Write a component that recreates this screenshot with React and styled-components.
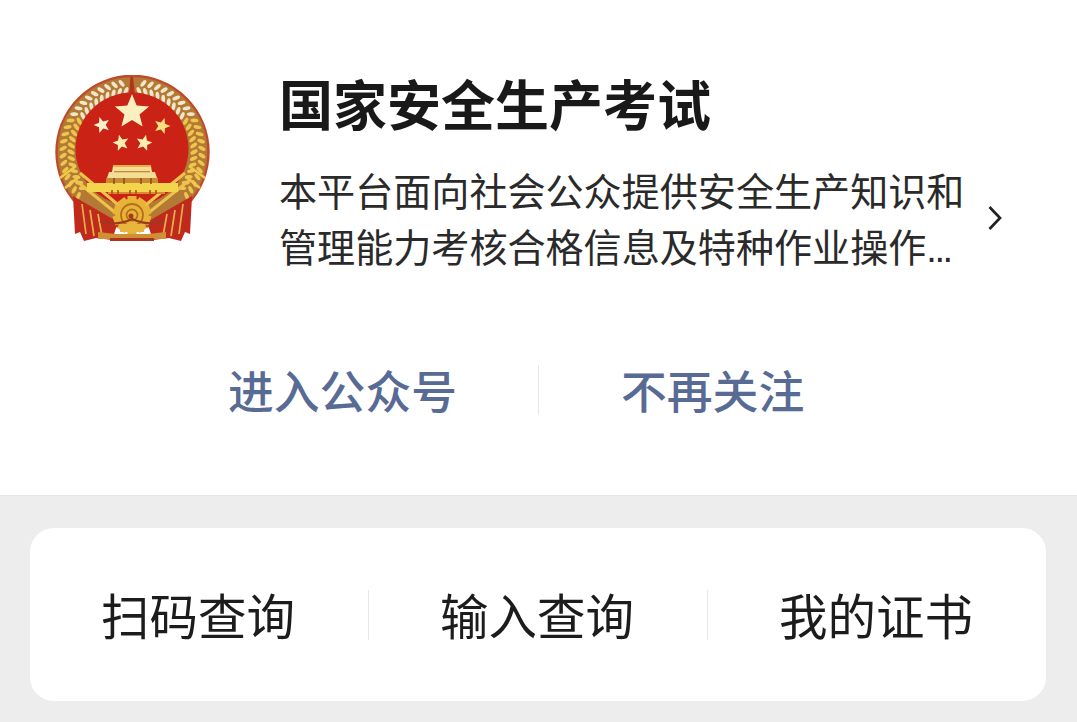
import styled, { createGlobalStyle } from "styled-components";

const GlobalStyle = createGlobalStyle`
  html, body {
    margin: 0;
    padding: 0;
    background: #ededed;
  }
  body {
    font-family: "Liberation Sans", "Noto Sans CJK SC", sans-serif;
    overflow: hidden;
  }
`;

const Page = styled.div`
  width: 1077px;
  height: 722px;
  overflow: hidden;
  background: #ededed;
`;
const Header = styled.header`
  height: 495px;
  background: #fff;
  border-bottom: 1px solid #e5e5e5;
`;
const Profile = styled.div`
  display: flex;
  align-items: flex-start;
  padding: 75px 0 0 54px;
`;
const EmblemSvg = styled.svg`
  flex: none;
  width: 157px;
  height: 168px;
  margin-right: 68px;
`;
const Info = styled.div`
  width: 691px;
  flex: none;
`;
const Title = styled.h1`
  margin: 0;
  font-size: 54px;
  line-height: 64px;
  font-weight: 700;
  color: #191919;
`;
const Desc = styled.p`
  margin: 26px 0 0;
  font-size: 38.1px;
  line-height: 56px;
  font-weight: 400;
  color: #2a2a2a;
  white-space: nowrap;
`;
const Dots = styled.span`
  letter-spacing: -2.5px;
`;
const Chevron = styled.svg`
  flex: none;
  width: 16px;
  height: 26px;
  margin: 130px 0 0 17px;
`;
const Actions = styled.div`
  display: flex;
  align-items: center;
  height: 50px;
  margin-top: 88px;
  padding-left: 228px;
`;
const ActionLink = styled.a`
  font-size: 45.8px;
  line-height: 54px;
  padding-top: 7px;
  font-weight: 500;
  color: #576b95;
`;
const Divider = styled.span`
  flex: none;
  width: 1px;
  height: 50px;
  background: #e8e8e8;
  margin: ${(p) => p.$margin || 0};
`;
const Card = styled.nav`
  display: flex;
  align-items: center;
  height: 173px;
  margin: 32px 31px 0 30px;
  background: #fff;
  border-radius: 24px;
`;
const MenuItem = styled.a`
  flex: 1;
  text-align: center;
  font-size: 48.5px;
  line-height: 56px;
  padding: 7px 2px 0 0;
  color: #1c1c1c;
`;

const starPoints = (cx, cy, r, rotate = 0) => {
  const pts = [];
  for (let i = 0; i < 10; i++) {
    const rad = i % 2 === 0 ? r : r * 0.44;
    const a = ((-90 + rotate + i * 36) * Math.PI) / 180;
    pts.push(`${(cx + rad * Math.cos(a)).toFixed(2)},${(cy + rad * Math.sin(a)).toFixed(2)}`);
  }
  return pts.join(" ");
};

// wheat grains around the disc, in two rows on each side
const grains = [];
for (let deg = 6; deg <= 128; deg += 6) {
  [-1, 1].forEach((side) => {
    [61.5, 69.5].forEach((r, row) => {
      const off = row ? 3 : 0;
      const a = ((deg + off - 90) * Math.PI) / 180;
      const x = 132.5 + side * r * Math.cos(a);
      const y = 152 + r * Math.sin(a);
      const rot = side * (deg + off + (row ? 30 : -30));
      const fill = deg < 58 ? "#f3e6cc" : "#efc64e";
      grains.push({ x, y, rot, fill });
    });
  });
}

const teeth = [];
for (let i = 0; i < 10; i++) teeth.push(i * 36);

function Emblem() {
  return (
    <EmblemSvg viewBox="54 75 157 168">
      <defs>
        <filter id="soft" x="-5%" y="-5%" width="110%" height="110%">
          <feGaussianBlur stdDeviation="0.6" />
        </filter>
      </defs>
      <g filter="url(#soft)">
        {/* wreath */}
        <circle cx="132.5" cy="152" r="76" fill="#b27a35" stroke="#c04a2c" strokeWidth="2.4" />
        {grains.map((g, i) => (
          <ellipse
            key={i}
            cx={g.x.toFixed(2)}
            cy={g.y.toFixed(2)}
            rx="1.9"
            ry="4"
            fill={g.fill}
            transform={`rotate(${g.rot.toFixed(1)} ${g.x.toFixed(2)} ${g.y.toFixed(2)})`}
          />
        ))}
        <path d="M130.5 77 L129 95 H135 L133 77 Z" fill="#b5301f" />
        {/* ribbons */}
        <path d="M73 196 L118 222 L112 240 L96 238 L84 241 L80 232 L75 234 Z" fill="#c02a1c" />
        <path d="M192 196 L147 222 L153 240 L169 238 L181 241 L185 232 L190 234 Z" fill="#c02a1c" />
        <path d="M82 204 L86 234 M90 210 L94 236 M98 214 L102 236" stroke="#e6b04a" strokeWidth="1.7" />
        <path d="M183 204 L179 234 M175 210 L171 236 M167 214 L163 236" stroke="#e6b04a" strokeWidth="1.7" />
        {/* disc */}
        <circle cx="132" cy="149" r="56.5" fill="#cb2019" />
        {/* crossed stalks */}
        <path d="M60 178 L76 166 M65 188 L79 177" stroke="#f0c84e" strokeWidth="2.6" />
        <path d="M205 178 L189 166 M200 188 L186 177" stroke="#f0c84e" strokeWidth="2.6" />
        <path d="M74 179 L117 214 M80 173 L122 208" stroke="#eec24a" strokeWidth="3" />
        <path d="M191 179 L147 214 M185 173 L142 208" stroke="#eec24a" strokeWidth="3" />
        {/* stars */}
        <polygon points={starPoints(132, 112, 18)} fill="#fbf0bd" />
        <polygon points={starPoints(102, 125, 8.4, -18)} fill="#fbf0cc" />
        <polygon points={starPoints(162, 126, 8.4, 18)} fill="#f8e07c" />
        <polygon points={starPoints(121, 143, 8.4, -14)} fill="#fbeeb2" />
        <polygon points={starPoints(144, 143, 8.4, 14)} fill="#fbeeb2" />
        {/* gate */}
        <path d="M113 166 H151 L152 172 H155 L157 178 H107 L109 172 H112 Z" fill="#f3de97" />
        <rect x="113" y="165" width="38" height="2" fill="#e2b24a" />
        <rect x="114" y="171" width="36" height="1.3" fill="#c9892e" />
        <rect x="106" y="178" width="52" height="5" fill="#c98a30" />
        <rect x="87" y="183" width="91" height="9" fill="#f3d54e" />
        <path d="M114 178 V184 M124 178 V184 M141 178 V184 M151 178 V184" stroke="#8f4a1c" strokeWidth="1.5" />
        <path d="M108 192 H165 V194 H108 Z" fill="#d98a30" />
        <path d="M112 190 V194 M118 190 V194 M130 190 V194 M136 190 V194 M150 190 V194 M156 190 V194" stroke="#a8521e" strokeWidth="1.6" />
        {/* gear */}
        <g fill="#e8b438">
          {teeth.map((t) => (
            <rect key={t} x="127.5" y="196" width="9" height="8" transform={`rotate(${t} 132 215)`} />
          ))}
        </g>
        <circle cx="132" cy="215" r="16.5" fill="#e8b438" />
        <circle cx="132" cy="215" r="11" fill="none" stroke="#b4701f" strokeWidth="1.8" />
        <circle cx="132" cy="215" r="5.5" fill="none" stroke="#b4701f" strokeWidth="1.8" />
        <circle cx="131" cy="216" r="2.5" fill="#a03a1c" />
        <path d="M100 222 Q118 226 132 219 Q148 226 164 222" fill="none" stroke="#9c3a1c" strokeWidth="2" />
        <rect x="120" y="224" width="24" height="8" fill="#e8b63e" />
        <path d="M98 232 L116 234 H148 L166 232 V239 H98 Z" fill="#cf8f32" />
        <rect x="110" y="238" width="44" height="3" fill="#a8351e" />
      </g>
    </EmblemSvg>
  );
}

export default function App() {
  return (
    <Page>
      <GlobalStyle />
      <Header>
        <Profile>
          <Emblem />
          <Info>
            <Title>国家安全生产考试</Title>
            <Desc>
              本平台面向社会公众提供安全生产知识和
              <br />
              管理能力考核合格信息及特种作业操作<Dots>...</Dots>
            </Desc>
          </Info>
          <Chevron viewBox="0 0 16 26">
            <path d="M2.5 2 L13 13 L2.5 24" fill="none" stroke="#222" strokeWidth="2.7" />
          </Chevron>
        </Profile>
        <Actions>
          <ActionLink>进入公众号</ActionLink>
          <Divider $margin="0 82px 0 81px" />
          <ActionLink>不再关注</ActionLink>
        </Actions>
      </Header>
      <Card>
        <MenuItem>扫码查询</MenuItem>
        <Divider />
        <MenuItem>输入查询</MenuItem>
        <Divider />
        <MenuItem>我的证书</MenuItem>
      </Card>
    </Page>
  );
}
